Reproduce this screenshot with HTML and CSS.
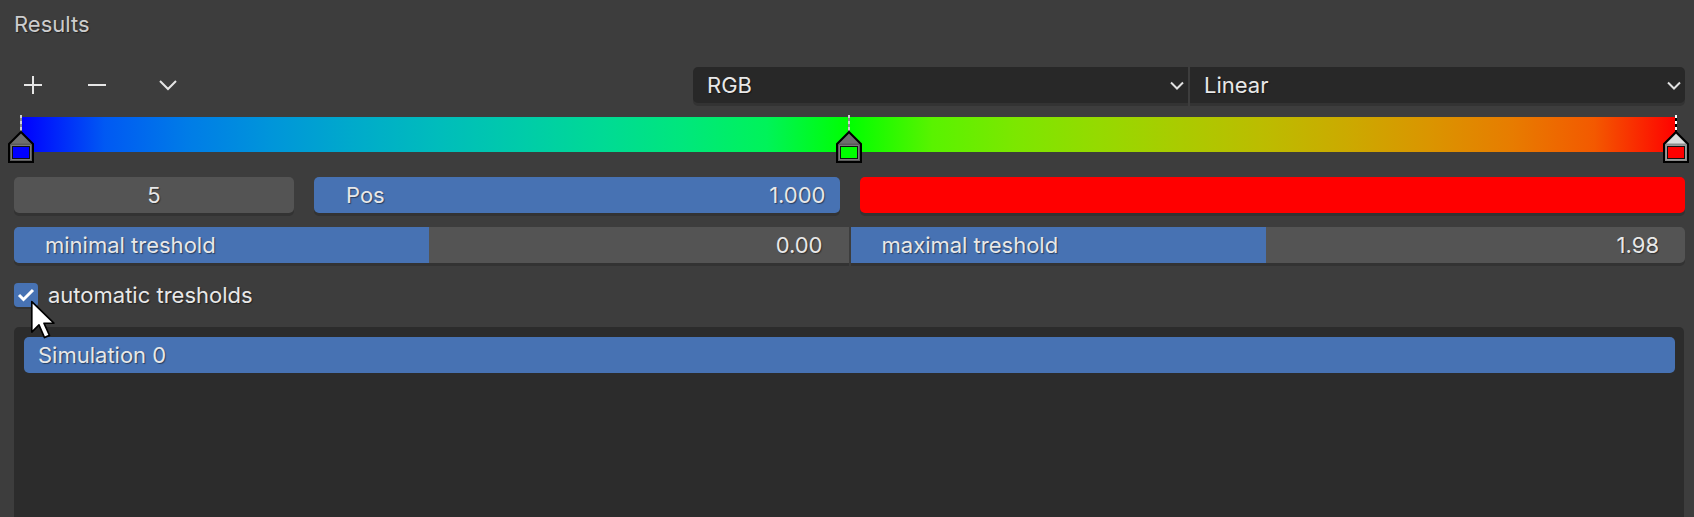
FILE: index.html
```html
<!DOCTYPE html>
<html>
<head>
<meta charset="utf-8">
<link rel="stylesheet" href="styles.css">
</head>
<body>
<div class="panel">
  <div class="header">Results</div>

  <div class="toolbar">
    <div class="tools">
      <svg class="tool" width="20" height="20" viewBox="0 0 20 20"><path d="M10 1v18M1 10h18" stroke="#e6e6e6" stroke-width="2" fill="none"/></svg>
      <svg class="tool" width="20" height="20" viewBox="0 0 20 20"><path d="M1 10h18" stroke="#e6e6e6" stroke-width="2" fill="none"/></svg>
      <svg class="tool" width="20" height="20" viewBox="0 0 20 20"><path d="M2 6l8 8 8-8" stroke="#e6e6e6" stroke-width="2" fill="none"/></svg>
    </div>
    <div class="selects">
      <div class="select"><span>RGB</span><svg width="14" height="9" viewBox="0 0 14 9"><path d="M1 1.5l6 6 6-6" stroke="#e0e0e0" stroke-width="2" fill="none"/></svg></div>
      <div class="select"><span>Linear</span><svg width="14" height="9" viewBox="0 0 14 9"><path d="M1 1.5l6 6 6-6" stroke="#e0e0e0" stroke-width="2" fill="none"/></svg></div>
    </div>
  </div>

  <div class="ramp">
    <div class="marker" style="left:0%">
      <svg width="26" height="48" viewBox="0 0 26 48">
        <rect x="12" y="0" width="2" height="17" fill="#8a8a8a"/>
        <path d="M12 0h2v3h-2zM12 6h2v3h-2zM12 12h2v3h-2z" fill="#cfcfcf"/>
        <polygon points="13,17 25,29 25,47 1,47 1,29" fill="#5a5a5a" stroke="#000" stroke-width="2"/>
        <polygon points="13,19 22.5,28.5 3.5,28.5" fill="#6e6e6e"/>
        <rect x="3" y="30" width="20" height="15" fill="#7a7a7a"/>
        <rect x="4" y="31" width="18" height="13" fill="#111"/>
        <rect x="5" y="32" width="16" height="11" fill="#0000ff"/>
      </svg>
    </div>
    <div class="marker" style="left:50%">
      <svg width="26" height="48" viewBox="0 0 26 48">
        <rect x="12" y="0" width="2" height="17" fill="#8a8a8a"/>
        <path d="M12 0h2v3h-2zM12 6h2v3h-2zM12 12h2v3h-2z" fill="#cfcfcf"/>
        <polygon points="13,17 25,29 25,47 1,47 1,29" fill="#5a5a5a" stroke="#000" stroke-width="2"/>
        <polygon points="13,19 22.5,28.5 3.5,28.5" fill="#6e6e6e"/>
        <rect x="3" y="30" width="20" height="15" fill="#7a7a7a"/>
        <rect x="4" y="31" width="18" height="13" fill="#111"/>
        <rect x="5" y="32" width="16" height="11" fill="#00ff00"/>
      </svg>
    </div>
    <div class="marker" style="left:100%">
      <svg width="26" height="48" viewBox="0 0 26 48">
        <rect x="12" y="0" width="2" height="17" fill="#000"/>
        <path d="M12 0h2v3h-2zM12 6h2v3h-2zM12 12h2v3h-2z" fill="#fff"/>
        <polygon points="13,17 25,29 25,47 1,47 1,29" fill="#8c8c8c" stroke="#000" stroke-width="2"/>
        <polygon points="13,19 22.5,28.5 3.5,28.5" fill="#dcdcdc"/>
        <rect x="3" y="30" width="20" height="15" fill="#9a9a9a"/>
        <rect x="4" y="31" width="18" height="13" fill="#111"/>
        <rect x="5" y="32" width="16" height="11" fill="#ff0000"/>
      </svg>
    </div>
  </div>

  <div class="row-fields">
    <div class="left-pair">
      <div class="field num center">5</div>
      <div class="field blue split"><span>Pos</span><span class="val-tight">1.000</span></div>
    </div>
    <div class="field swatch"></div>
  </div>

  <div class="row-sliders">
    <div class="slider left-join">
      <div class="fill" style="width:49.7%"></div>
      <span class="label">minimal treshold</span><span class="val">0.00</span>
    </div>
    <div class="slider right-join">
      <div class="fill" style="width:49.75%"></div>
      <span class="label">maximal treshold</span><span class="val">1.98</span>
    </div>
  </div>

  <div class="check-row">
    <div class="checkbox">
      <svg width="18" height="14" viewBox="0 0 18 14"><path d="M2 7l4.5 4.5L16 2" stroke="#fff" stroke-width="3" fill="none"/></svg>
    </div>
    <span class="check-label">automatic tresholds</span>
  </div>

  <div class="listbox">
    <div class="list-item">Simulation 0</div>
  </div>

  <svg class="cursor" width="29" height="42" viewBox="0 0 26 38">
    <path d="M1.5 1.5 L1.5 29 L8 22.5 L13 34 L17.5 32 L12.5 21 L21.5 21 Z" fill="#fff" stroke="#000" stroke-width="1.5" stroke-linejoin="round"/>
  </svg>
</div>
</body>
</html>
```

FILE: styles.css
```css
html, body {
  margin: 0;
  padding: 0;
  background: #3d3d3d;
  overflow: hidden;
}

body {
  width: 1694px;
  height: 517px;
  font-family: "Inter", "Noto Sans", sans-serif;
  font-size: 22px;
  color: #e8e8e8;
}

.panel {
  position: relative;
  padding: 0 9px 0 14px;
}

.header {
  height: 50px;
  padding-top: 11px;
  line-height: 26px;
  box-sizing: border-box;
  color: #cdcdcd;
  text-shadow: 1px 1px 1px rgba(0,0,0,0.45);
  font-size: 22px;
}

.toolbar {
  display: flex;
  align-items: center;
  height: 36px;
  margin-top: 17px;
}

.tools {
  width: 679px;
  flex: none;
  box-sizing: border-box;
  display: flex;
  align-items: center;
  padding-left: 9px;
  gap: 44px;
}

.tool:last-child {
  margin-left: 7px;
}

.selects {
  flex: 1;
  display: flex;
  gap: 2px;
  height: 36px;
}

.select {
  flex: 1;
  background: #282828;
  display: flex;
  align-items: center;
  justify-content: space-between;
  padding: 0 4px 0 14px;
  box-shadow: 0 3px 0 #333333;
  text-shadow: 1px 1px 1px rgba(0,0,0,0.45);
}

.select:first-child {
  border-radius: 5px 0 0 5px;
}

.select:last-child {
  border-radius: 0 5px 5px 0;
}

.ramp {
  position: relative;
  height: 35px;
  margin: 14px 8px 25px 8px;
  background: linear-gradient(to right,
    rgb(0,0,255) 0%, rgb(0,89,243) 5%, rgb(0,124,231) 10%, rgb(0,149,218) 15%,
    rgb(0,170,203) 20%, rgb(0,188,188) 25%, rgb(0,203,170) 30%, rgb(0,218,149) 35%,
    rgb(0,231,124) 40%, rgb(0,243,89) 45%, rgb(0,255,0) 50%,
    rgb(89,243,0) 55%, rgb(124,231,0) 60%, rgb(149,218,0) 65%, rgb(170,203,0) 70%,
    rgb(188,188,0) 75%, rgb(203,170,0) 80%, rgb(218,149,0) 85%, rgb(231,124,0) 90%,
    rgb(243,89,0) 95%, rgb(255,0,0) 100%);
}

.marker {
  position: absolute;
  top: -2px;
  width: 26px;
  height: 48px;
  transform: translateX(-50%);
  margin-left: -1px;
}

.marker svg {
  display: block;
}

.row-fields {
  display: grid;
  grid-template-columns: 1fr 1fr;
  gap: 20px;
  height: 36px;
}

.left-pair {
  display: grid;
  grid-template-columns: 280px 1fr;
  gap: 20px;
}

.field {
  border-radius: 5px;
  height: 36px;
  display: flex;
  align-items: center;
  box-shadow: 0 3px 0 #333333;
  text-shadow: 1px 1px 1px rgba(0,0,0,0.45);
}

.num {
  background: #545454;
}

.center {
  justify-content: center;
}

.blue {
  background: #4772b3;
}

.split {
  justify-content: space-between;
  padding: 0 14px 0 32px;
}

.swatch {
  background: #ff0000;
}

.row-sliders {
  display: flex;
  gap: 2px;
  margin-top: 14px;
  height: 36px;
}

.slider {
  flex: 1;
  position: relative;
  background: #545454;
  display: flex;
  align-items: center;
  justify-content: space-between;
  padding: 0 26px 0 31px;
  overflow: hidden;
  box-shadow: 0 3px 0 #333333;
  text-shadow: 1px 1px 1px rgba(0,0,0,0.45);
}

.left-join {
  border-radius: 5px 0 0 5px;
}

.right-join {
  border-radius: 0 5px 5px 0;
}

.fill {
  position: absolute;
  left: 0;
  top: 0;
  bottom: 0;
  background: #4772b3;
}

.label, .val {
  position: relative;
}

.check-row {
  display: flex;
  align-items: center;
  height: 24px;
  margin-top: 20px;
  gap: 10px;
}

.checkbox {
  width: 24px;
  height: 24px;
  border-radius: 4px;
  background: #4772b3;
  display: flex;
  align-items: center;
  justify-content: center;
  box-shadow: 0 2px 0 #333333;
}

.check-label {
  text-shadow: 1px 1px 1px rgba(0,0,0,0.45);
}

.listbox {
  margin-top: 20px;
  margin-right: 1px;
  height: 200px;
  background: #2c2c2c;
  border-radius: 5px 5px 0 0;
  padding: 10px 9px 0 10px;
}

.list-item {
  height: 36px;
  border-radius: 5px;
  background: #4772b3;
  display: flex;
  align-items: center;
  padding-left: 14px;
  text-shadow: 1px 1px 1px rgba(0,0,0,0.45);
}

.cursor {
  position: absolute;
  left: 30px;
  top: 300px;
}
```
